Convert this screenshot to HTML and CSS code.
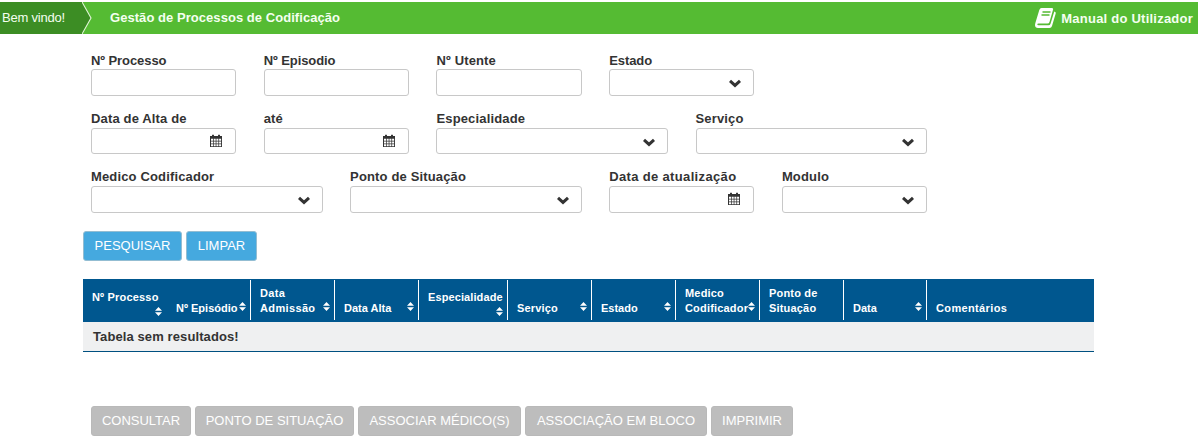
FILE: index.html
```html
<!DOCTYPE html>
<html lang="pt">
<head>
<meta charset="utf-8">
<title>Gestão de Processos de Codificação</title>
<link rel="stylesheet" href="styles.css">
</head>
<body>
<svg class="defs" aria-hidden="true">
  <symbol id="chevron" viewBox="0 0 12 9"><path d="M1 1.800 6 6.400l5-4.600" fill="none" stroke="currentColor" stroke-width="3"/></symbol>
  <symbol id="calendar" viewBox="0 0 12 13">
    <path d="M0 2h12v11H0z" fill="currentColor"/>
    <path d="M2 1.200Q3 -.4 4 1.200V3.500H2zM8 1.200Q9 -.4 10 1.200V3.500H8z" fill="currentColor"/>
    <path d="M1 4.800h2v2H1zM3.700 4.800h2v2h-2zM6.400 4.800h2v2h-2zM9.100 4.800h2v2h-2zM1 7.500h2v2H1zM3.700 7.500h2v2h-2zM6.400 7.500h2v2h-2zM9.100 7.500h2v2h-2zM1 10.200h2v2H1zM3.700 10.200h2v2h-2zM6.400 10.200h2v2h-2zM9.100 10.200h2v2h-2z" fill="#fff"/>
  </symbol>
  <symbol id="sort" viewBox="0 0 7 9"><path d="M0 3.800 3.500 0 7 3.800zM0 5.200 3.500 9 7 5.200z" fill="currentColor"/></symbol>
</svg>

<header class="topbar">
  <div class="welcome">Bem vindo!</div>
  <svg class="arrow" viewBox="0 0 12 32"><path d="M0 0 9 16 0 32z" fill="#3c8d24"/><path d="M0 0 9 16 0 32" fill="none" stroke="#e2f5d8" stroke-width="1.100"/></svg>
  <h1 class="title">Gestão de Processos de Codificação</h1>
  <a class="manual">
    <svg class="book" viewBox="0 0 22 20">
      <path d="M6.500 0H17q1.500 0 1.100 1.500L14.500 14q-.5 1.500-2 1.500H3.500q-1.200 0-1.200.8 0 .9 1.200.9h10q1.500 0 2-1.500L19.300 3.600q1.900.3 1.400 2L17 18q-.6 2-2.500 2H3Q0 20 0 17q0-1 .5-2.500L4.300 2Q5 0 6.500 0z" fill="#fff"/>
      <path d="M7.500 4h8M6.500 7h8" stroke="#55bb33" stroke-width="1.300"/>
    </svg>
    <span>Manual do Utilizador</span>
  </a>
</header>

<main>
  <form class="filters">
    <div class="field"><label class="snug">Nº Processo</label><div class="input"></div></div>
    <div class="field"><label class="snug">Nº Episodio</label><div class="input"></div></div>
    <div class="field"><label>Nº Utente</label><div class="input"></div></div>
    <div class="field"><label class="snug">Estado</label><div class="input"><svg class="chev"><use href="#chevron"/></svg></div></div>

    <div class="field first short"><label>Data de Alta de</label><div class="input"><svg class="cal"><use href="#calendar"/></svg></div></div>
    <div class="field short"><label>até</label><div class="input"><svg class="cal"><use href="#calendar"/></svg></div></div>
    <div class="field wide short"><label>Especialidade</label><div class="input"><svg class="chev"><use href="#chevron"/></svg></div></div>
    <div class="field wide short"><label>Serviço</label><div class="input"><svg class="chev"><use href="#chevron"/></svg></div></div>

    <div class="field wide first low"><label>Medico Codificador</label><div class="input"><svg class="chev"><use href="#chevron"/></svg></div></div>
    <div class="field wide low"><label>Ponto de Situação</label><div class="input"><svg class="chev"><use href="#chevron"/></svg></div></div>
    <div class="field low"><label class="loose">Data de atualização</label><div class="input"><svg class="cal"><use href="#calendar"/></svg></div></div>
    <div class="field low"><label>Modulo</label><div class="input"><svg class="chev"><use href="#chevron"/></svg></div></div>
  </form>

  <div class="search-actions">
    <button class="btn primary search">PESQUISAR</button>
    <button class="btn primary clear">LIMPAR</button>
  </div>

  <section class="table">
    <div class="head">
      <div class="th stacked plain"><span>Nº Processo</span><svg class="sort"><use href="#sort"/></svg></div>
      <div class="th"><span class="tight">Nº Episódio</span><svg class="sort"><use href="#sort"/></svg></div>
      <div class="th"><span class="spaced">Data<br>Admissão</span><svg class="sort"><use href="#sort"/></svg></div>
      <div class="th"><span class="tight">Data Alta</span><svg class="sort"><use href="#sort"/></svg></div>
      <div class="th stacked"><span class="close">Especialidade</span><svg class="sort"><use href="#sort"/></svg></div>
      <div class="th"><span>Serviço</span><svg class="sort"><use href="#sort"/></svg></div>
      <div class="th"><span class="tight">Estado</span><svg class="sort"><use href="#sort"/></svg></div>
      <div class="th"><span>Medico<br>Codificador</span><svg class="sort"><use href="#sort"/></svg></div>
      <div class="th"><span>Ponto de<br>Situação</span></div>
      <div class="th"><span class="tight">Data</span><svg class="sort"><use href="#sort"/></svg></div>
      <div class="th plain"><span class="spaced">Comentários</span></div>
    </div>
    <div class="empty">Tabela sem resultados!</div>
  </section>

  <div class="actions">
    <button class="btn muted consult">CONSULTAR</button>
    <button class="btn muted status">PONTO DE SITUAÇÃO</button>
    <button class="btn muted assign">ASSOCIAR MÉDICO(S)</button>
    <button class="btn muted bulk">ASSOCIAÇÃO EM BLOCO</button>
    <button class="btn muted print">IMPRIMIR</button>
  </div>
</main>
</body>
</html>
```
FILE: styles.css
```css
* { box-sizing: border-box; }
body {
  margin: 0;
  padding-top: 2px;
  background: #fff;
  color: #333;
  font-family: "Liberation Sans", Arial, sans-serif;
  font-size: 13px;
  overflow: hidden;
}
.defs { display: none; }
svg { display: block; flex: none; }

.topbar {
  display: flex;
  height: 32px;
  background: #55bb33;
  color: #f4fff0;
  line-height: 31px;
}
.welcome { width: 82px; padding-left: 2px; background: #3c8d24; letter-spacing: -.2px; white-space: nowrap; }
.arrow { width: 12px; height: 32px; }
.title { margin: 0 0 0 16px; font-size: 13px; font-weight: bold; letter-spacing: .05px; }
.manual { display: flex; margin-left: auto; padding-right: 5px; font-weight: bold; line-height: 33px; letter-spacing: .23px; }
.book { width: 22px; height: 20px; margin: 6px 4px 0 0; }

.filters {
  display: grid;
  grid-template-columns: repeat(10, 86.36px);
  grid-auto-rows: 58px;
  width: 864px;
  margin: 18px 0 0 91px;
}
.field { grid-column: span 2; padding-right: 27.4px; }
.wide { grid-column: span 3; }
.first { grid-column: 1 / span 2; }
.wide.first { grid-column: 1 / span 3; }
.field label { display: block; height: 17px; line-height: 17px; font-weight: bold; letter-spacing: .15px; white-space: nowrap; }
.field.short label, .field.low label { height: 18px; }
.field .loose { letter-spacing: .35px; }
.field .snug { letter-spacing: -.08px; }
.input {
  display: flex;
  justify-content: flex-end;
  height: 27px;
  border: 1px solid #c8c8c8;
  border-radius: 3px;
}
.short .input { height: 26px; }
.chev { width: 12px; height: 9px; margin: 9px 12px 0 0; }
.cal { width: 12px; height: 13px; margin: 5px 13px 0 0; }

.search-actions { display: flex; gap: 4px; margin: 5px 0 0 83px; }
.btn {
  height: 30px;
  padding: 0;
  border: 1px solid #b7b7b7;
  border-radius: 3px;
  color: #fff;
  font: 13px/26px "Liberation Sans", Arial, sans-serif;
  white-space: nowrap;
}
.primary { background: #45a9df; border-color: #93bdd2; }
.search { width: 99px; }
.clear { width: 71px; }

.table { width: 1011px; margin: 18px 0 0 83px; }
.head {
  display: grid;
  grid-template-columns: 84px 84px 84px 84px 89px 84px 84px 84px 84px 83px 167px;
  height: 43px;
  padding: 1px 0 2px;
  background: #00578f;
  color: #fff;
  font-size: 11px;
  font-weight: bold;
  line-height: 15px;
  letter-spacing: .18px;
}
.th {
  display: flex;
  align-items: flex-end;
  justify-content: space-between;
  padding: 0 4px 4px 9px;
  border-right: 1px solid #fff;
  white-space: nowrap;
}
.plain { border-right-color: transparent; }
.tight { letter-spacing: 0; }
.close { letter-spacing: .1px; }
.spaced { letter-spacing: .36px; }
.sort { width: 7px; height: 9px; margin-bottom: 5px; }
.stacked { flex-direction: column; justify-content: flex-end; align-items: flex-start; }
.stacked .sort { align-self: flex-end; margin: 2px 0 0; }
.empty {
  height: 30px;
  padding-left: 10px;
  border-bottom: 1px solid #005080;
  background: #eff0f1;
  font-weight: bold;
  line-height: 30px;
  letter-spacing: .1px;
}

.actions { display: flex; gap: 4px; margin: 54px 0 0 91px; }
.muted { background: #bdbdbd; border-color: #b9b9b9; }
.consult { width: 100px; }
.status { width: 159px; }
.assign { width: 163px; }
.bulk { width: 182px; }
.print { width: 82px; }
```
